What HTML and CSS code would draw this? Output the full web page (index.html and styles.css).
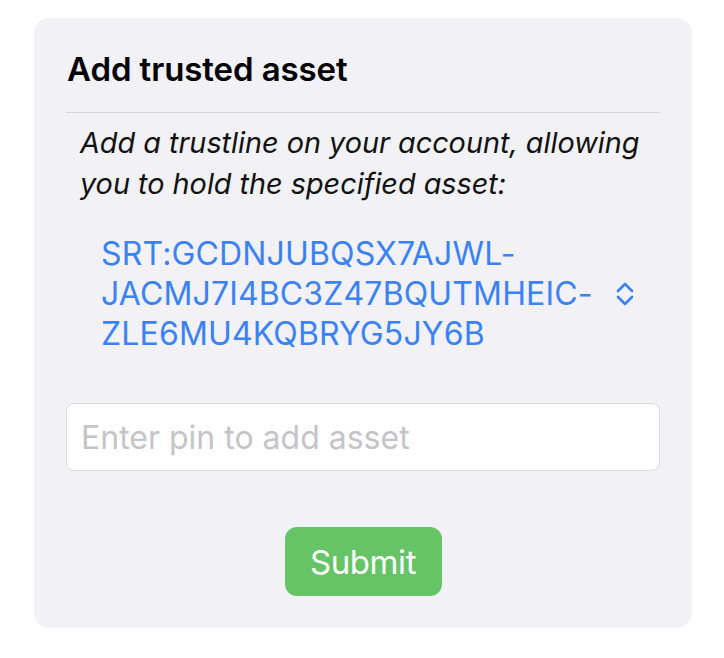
FILE: index.html
```html
<!DOCTYPE html>
<html>
<head>
<meta charset="utf-8">
<link rel="stylesheet" href="styles.css">
</head>
<body>
<div class="card">
  <h1 class="title">Add trusted asset</h1>
  <div class="divider"></div>
  <p class="desc">Add a trustline on your account, allowing you to hold the specified asset:</p>
  <div class="asset-row">
    <div class="asset">SRT:GCDNJUBQSX7AJWL-<br>JACMJ7I4BC3Z47BQUTMHEIC-<br>ZLE6MU4KQBRYG5JY6B</div>
    <svg class="chev" width="22" height="28" viewBox="0 0 22 28"><path d="M4 11 L11 4 L18 11 M4 17 L11 24 L18 17" fill="none" stroke="#3b82f6" stroke-width="2.6" stroke-linecap="round" stroke-linejoin="round"/></svg>
  </div>
  <div class="input"><span class="placeholder">Enter pin to add asset</span></div>
  <div class="actions"><button class="submit">Submit</button></div>
</div>
</body>
</html>
```
FILE: styles.css
```css
html, body { margin: 0; padding: 0; background: #ffffff; }
body { font-family: Inter, "Noto Sans", sans-serif; }
.card {
  margin: 18px 0 0 34px;
  width: 658px;
  height: 610px;
  box-sizing: border-box;
  background: #f1f1f6;
  border-radius: 15px;
  padding: 0 32px 0 32px;
}
.title {
  margin: 0;
  padding: 33px 0 0 1px;
  font-size: 33px;
  line-height: 36px;
  font-weight: 600;
  color: #000;
  letter-spacing: -0.1px;
}
.divider {
  margin-top: 25px;
  height: 1px;
  background: #d4d4d8;
}
.desc {
  margin: 9px 0 0 14px;
  font-size: 28.8px;
  line-height: 41px;
  font-style: italic;
  color: #111;
  letter-spacing: 0;
}
.asset-row {
  display: flex;
  align-items: center;
  margin: 30px 0 0 35px;
}
.asset {
  font-size: 32px;
  line-height: 40px;
  color: #3b82f6;
  width: 513px;
  letter-spacing: 0.15px;
}
.input {
  margin-top: 49px;
  height: 68px;
  box-sizing: border-box;
  background: #fff;
  border: 1px solid #dcdcdf;
  border-radius: 8px;
  display: flex;
  align-items: center;
  padding-left: 14px;
}
.placeholder {
  font-size: 32px;
  color: #c4c4c8;
  letter-spacing: 0;
}
.actions {
  display: flex;
  justify-content: center;
  margin-top: 56px;
}
.submit {
  width: 157px;
  height: 69px;
  border: none;
  border-radius: 12px;
  background: #66c466;
  color: #fff;
  font-family: Inter, "Noto Sans", sans-serif;
  font-size: 33px;
  letter-spacing: -0.4px;
  padding: 0;
}
```
